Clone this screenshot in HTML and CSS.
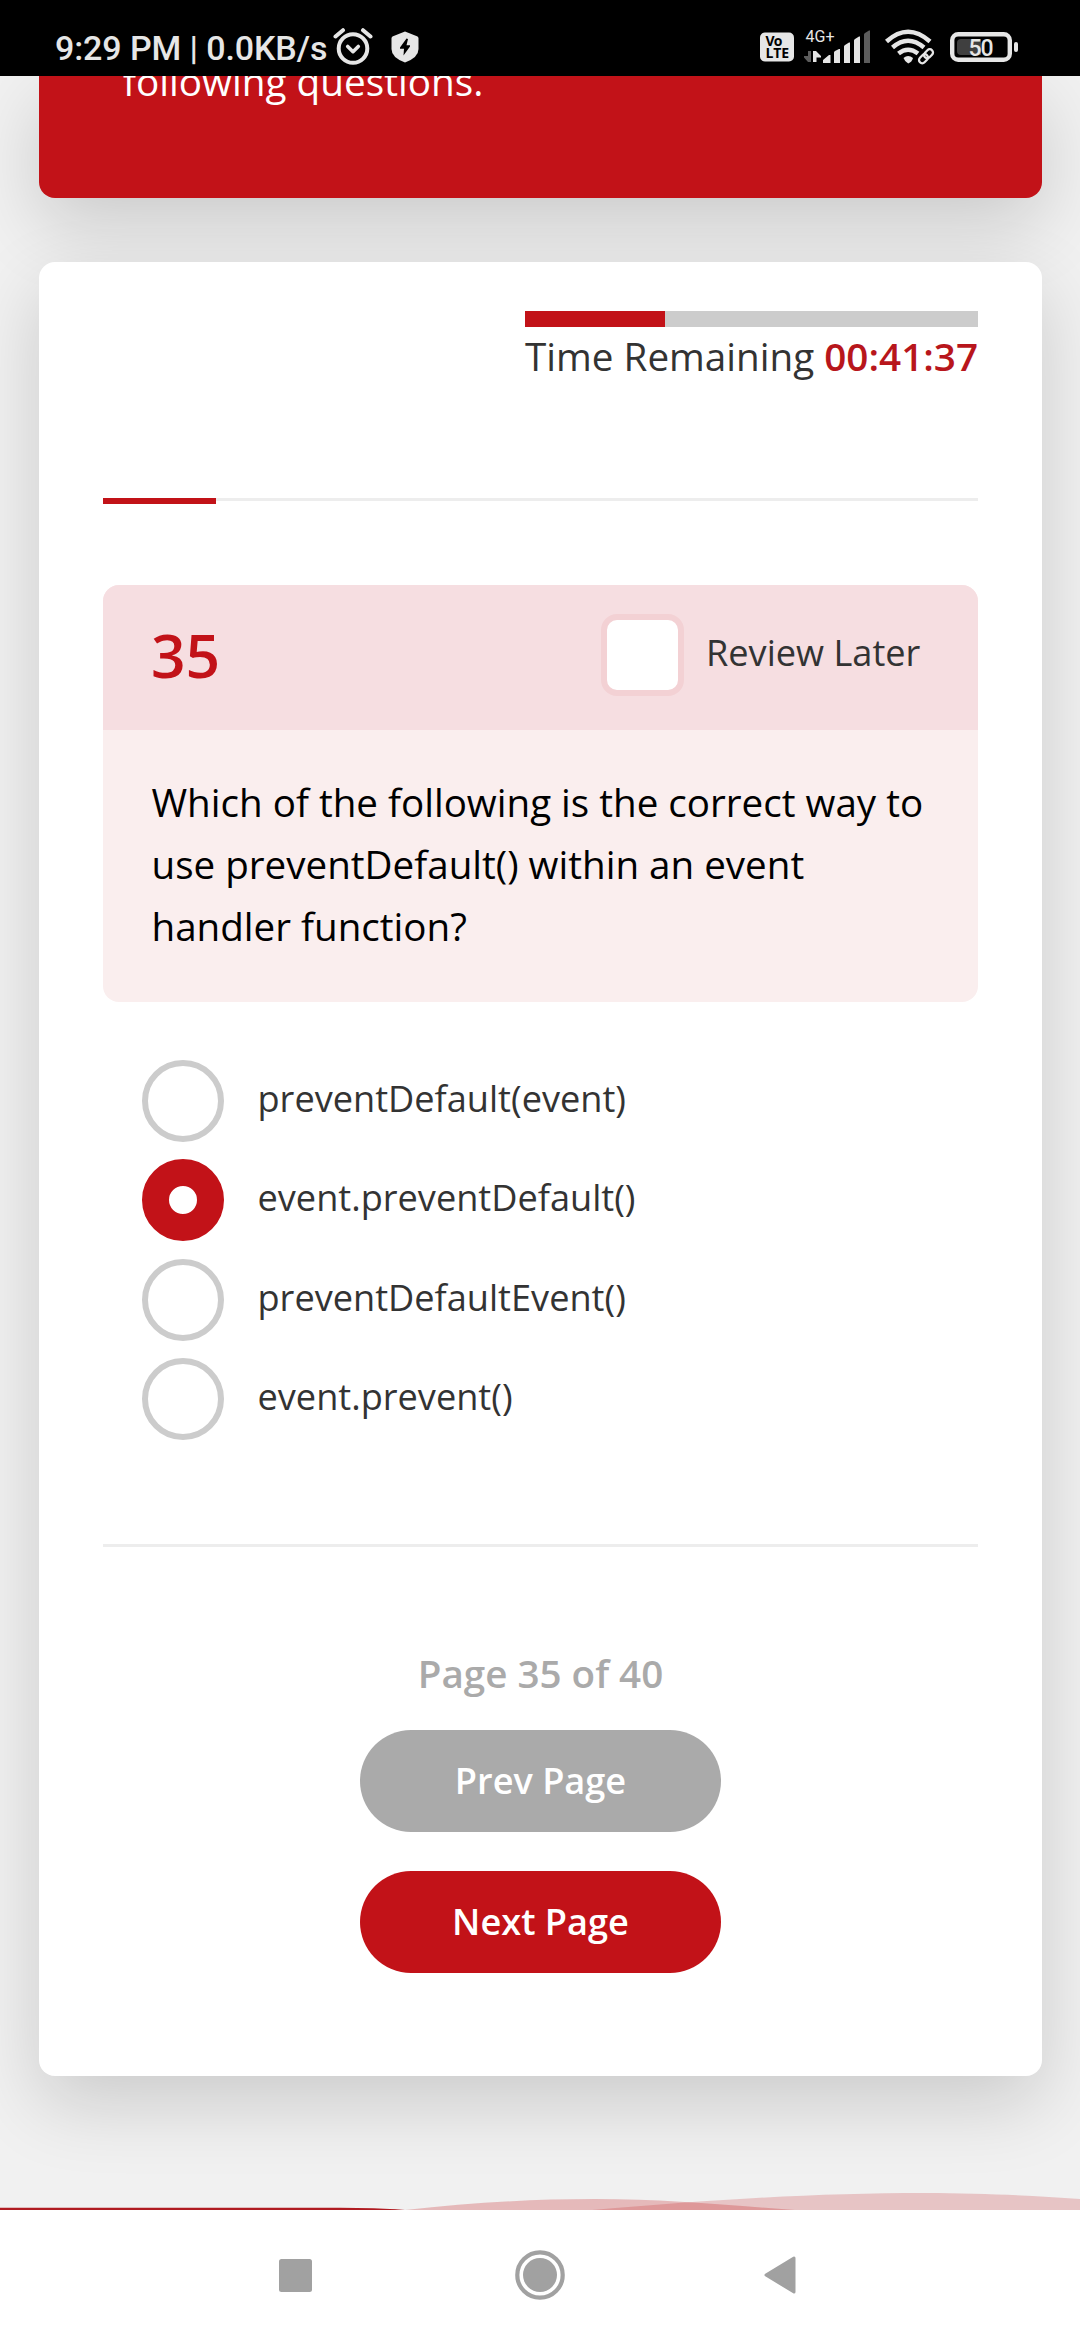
FILE: index.html
```html
<!DOCTYPE html>
<html lang="en">
<head>
<meta charset="utf-8">
<title>Quiz</title>
<link rel="stylesheet" href="styles.css">
</head>
<body>
<div class="screen">
  <header class="status">
    <span class="status-text">9:29 PM | 0.0KB/s</span>
    <svg class="ic-alarm" width="40" height="40" viewBox="0 0 40 40" fill="none" stroke="#e6e6e6" stroke-linecap="round">
      <circle cx="20" cy="21.5" r="14.3" stroke-width="4"/>
      <path d="M14.7 19.5l5.3 5.2 5.3-5.2" stroke-width="3.6" stroke-linejoin="round"/>
      <path d="M2.5 9.5L10 3.2M37.500 9.500L30 3.200" stroke-width="4"/>
    </svg>
    <svg class="ic-shield" width="28" height="32" viewBox="0 0 28 32">
      <path d="M14 .5L26 5.200Q27.500 5.800 27.500 7.500V18Q27.500 26.500 14 31.500Q.5 26.500.5 18V7.500Q.5 5.800 2 5.200Z" fill="#e6e6e6"/>
      <path d="M15.500 7.500L9 16.500V17.800H13L12.500 24.500L19 15.500V14.200H15.500L17 8Z" fill="#000"/>
    </svg>
    <div class="status-right">
      <svg width="34" height="30" viewBox="0 0 34 30">
        <rect y=".5" width="34" height="29" rx="5" fill="#e6e6e6"/>
        <text class="volte" x="5.500" y="13.500" textLength="17">Vo</text>
        <text class="volte" x="5.500" y="26" textLength="23.500">LTE</text>
      </svg>
      <svg class="ic-signal" width="68" height="34" viewBox="0 0 68 34">
        <text class="net" x="2.500" y="12" textLength="29">4G+</text>
        <path d="M5 21h3v11h-3l-4-4.500v-1.500h4z" fill="#5c5c5c"/>
        <path d="M10 32V21h3l5 5v1.500h-4.500V32z" fill="#e6e6e6"/>
        <g fill="#e6e6e6"><path d="M20 33v-3l6-5h1.500v8zM31 33V22.500q0-1 1-1.500l4-2h1v14zM41 33V16.500q0-1 1-1.500l4-2.500h1V33zM51 33V10.500q0-1 1-1.500l4-2.500h1V33z"/></g>
        <path d="M61 33V4.500q0-1 1-1.500l4-2.500h1V33z" fill="#5c5c5c"/>
      </svg>
      <svg class="ic-wifi" width="52" height="36" viewBox="0 0 52 36" fill="none" stroke="#e6e6e6">
        <path d="M1.500 12.500Q23 -7 45 12.500" stroke-width="4.500"/>
        <path d="M7.500 18.500Q23 5 39 18.500" stroke-width="4.500"/>
        <path d="M13.500 24.500Q23 17 33 24.500" stroke-width="4.500"/>
        <path d="M18.500 29Q23 25 28 29Q27 33 23.200 34.500Q20 33 18.500 29Z" fill="#e6e6e6" stroke="none"/>
        <g stroke="#000" stroke-width="6"><rect x="35" y="25" width="11" height="7" rx="3.500" transform="rotate(-45 39 29)"/></g>
        <g stroke-width="2.300"><rect x="33.500" y="26.500" width="10" height="6.500" rx="3.250" transform="rotate(-45 38.500 29.750)"/><rect x="38.500" y="21.500" width="10" height="6.500" rx="3.250" transform="rotate(-45 43.500 24.750)"/></g>
      </svg>
      <svg class="ic-battery" width="69" height="30" viewBox="0 0 69 30">
        <rect x="2.200" y="2.200" width="57.600" height="25.600" rx="6" fill="none" stroke="#e6e6e6" stroke-width="4.400"/>
        <path d="M11 7H31V23H11Q7 23 7 19V11Q7 7 11 7Z" fill="#3f3f3f"/>
        <rect x="64" y="10" width="4" height="10" rx="2" fill="#e6e6e6"/>
        <text class="charge" x="18.500" y="24" textLength="25">50</text>
      </svg>
    </div>
  </header>

  <main class="page">
    <section class="intro">following questions.</section>
    <section class="quiz">
      <div class="timer">
        <div class="timer-bar"><div class="timer-fill"></div></div>
        <div class="timer-text"><span class="timer-label">Time Remaining</span><strong class="timer-value">00:41:37</strong></div>
      </div>
      <div class="progress"><div class="progress-fill"></div></div>
      <article class="question">
        <div class="question-head">
          <span class="number">35</span>
          <span class="check"></span>
          <span class="review">Review Later</span>
        </div>
        <p class="question-text">Which of the following is the correct way to<br>use preventDefault() within an event<br>handler function?</p>
      </article>
      <ul class="options">
        <li class="option"><span class="radio"></span><span class="option-text">preventDefault(event)</span></li>
        <li class="option"><span class="radio radio-on"></span><span class="option-text">event.preventDefault()</span></li>
        <li class="option"><span class="radio"></span><span class="option-text">preventDefaultEvent()</span></li>
        <li class="option"><span class="radio"></span><span class="option-text">event.prevent()</span></li>
      </ul>
      <footer class="pager">
        <div class="page-count">Page 35 of 40</div>
        <div class="btn btn-prev">Prev Page</div>
        <div class="btn btn-next">Next Page</div>
      </footer>
    </section>
    <svg class="waves" width="1080" height="20" viewBox="0 0 1080 20">
      <path d="M405 20C470 13 530 9 595 9C665 9 725 15 795 20Z" fill="#c21218" fill-opacity=".25"/>
      <path d="M592 20C720 9 820 3 925 3C985 3 1035 6 1080 9V20Z" fill="#c21218" fill-opacity=".2"/>
      <path d="M0 17.700H340Q375 18 405 19.500L395 20H0Z" fill="#b01c22"/>
    </svg>
  </main>

  <nav class="nav">
    <svg width="33" height="33" viewBox="0 0 33 33"><rect width="33" height="33" rx="2.500" fill="#a1a1a1"/></svg>
    <svg class="nav-home" width="50" height="50" viewBox="0 0 50 50"><circle cx="25" cy="25" r="22.700" fill="none" stroke="#a1a1a1" stroke-width="4.200"/><circle cx="25" cy="25" r="17" fill="#a1a1a1"/></svg>
    <svg width="32" height="38" viewBox="0 0 32 38"><path d="M2 19L30 2V36Z" fill="#a1a1a1" stroke="#a1a1a1" stroke-width="3" stroke-linejoin="round"/></svg>
  </nav>
</div>
</body>
</html>
```
FILE: styles.css
```css
* { box-sizing: border-box; }
body { margin: 0; font-family: "Open Sans", sans-serif; color: #333; }
svg { display: block; flex: none; }
.screen { width: 1080px; height: 2340px; display: flex; flex-direction: column; overflow: hidden; background: #fff; }

.status { height: 76px; flex: none; background: #000; display: flex; align-items: flex-start; padding: 28px 61px 0 55px; color: #e6e6e6; font-family: Roboto, sans-serif; }
.status-text { font-size: 34px; line-height: 40px; width: 271px; white-space: nowrap; font-weight: 500; letter-spacing: -0.1px; }
.ic-alarm { margin: -1px 0 0 7px; }
.ic-shield { margin: 3px 0 0 18px; }
.status-right { margin-left: auto; display: flex; align-items: flex-start; padding-top: 4px; }
.ic-signal { margin: -2px 0 0 9px; }
.ic-wifi { margin: -3px 0 0 14px; }
.ic-battery { margin-left: 13px; }
.volte { font: 700 14px "Open Sans", sans-serif; fill: #000; }
.net { font: 400 16px Roboto, sans-serif; fill: #e6e6e6; }
.charge { font: 500 23px Roboto, sans-serif; fill: #e6e6e6; }

.page { height: 2134px; flex: none; background: #f1f1f1; padding: 0 38px 0 39px; overflow: hidden; display: flex; flex-direction: column; }
.intro { height: 122px; flex: none; border-radius: 0 0 16px 16px; background: #c21218; color: #fff; font-size: 38.7px; line-height: 10px; padding-left: 84px; box-shadow: 0 27px 76px rgba(0,0,0,.16); }
.quiz { height: 1814px; flex: none; margin-top: 64px; border-radius: 16px; background: #fff; box-shadow: 0 27px 76px rgba(0,0,0,.16); padding: 49px 64px 0; display: flex; flex-direction: column; }

.timer { align-self: flex-end; width: 453px; }
.timer-bar { height: 16px; background: #ccc; }
.timer-fill { width: 140px; height: 16px; background: #c21218; }
.timer-text { display: flex; justify-content: space-between; white-space: nowrap; margin-top: 3px; font-size: 38.65px; line-height: 52px; }
.timer-value { font-weight: 600; color: #b8161c; }
.progress { height: 3px; flex: none; background: #ededed; margin-top: 116px; }
.progress-fill { width: 113px; height: 6px; background: #c21218; }

.question { margin-top: 84px; height: 417px; flex: none; border-radius: 16px; overflow: hidden; background: #faeeee; }
.question-head { height: 145px; background: #f6dee1; display: flex; align-items: flex-start; padding: 29px 0 0 48px; }
.number { width: 450px; font-size: 60.5px; line-height: 82px; font-weight: 600; color: #c21218; }
.check { width: 83px; height: 82px; flex: none; border: 6px solid #f3d1d4; border-radius: 16px; background: #fff; }
.review { margin-left: 22px; font-size: 36.15px; line-height: 76px; white-space: nowrap; }
.question-text { margin: 0; padding: 41px 0 0 48.500px; color: #000; font-size: 38.6px; line-height: 62px; white-space: nowrap; }

.options { list-style: none; margin: 58px 0 0; padding: 0 0 0 39px; height: 382px; flex: none; display: grid; grid-auto-rows: 82px; gap: 17.3px; }
.option { display: flex; align-items: flex-start; }
.radio { width: 82px; height: 82px; flex: none; border: 6px solid #ccc; border-radius: 50%; }
.radio-on { border: 27px solid #c21218; }
.option-text { margin-left: 33.5px; font-size: 36.15px; line-height: 76px; white-space: nowrap; }

.pager { margin-top: 102px; border-top: 3px solid #ededed; padding-top: 100px; display: flex; flex-direction: column; align-items: center; font-weight: 600; }
.page-count { color: #aaa; font-size: 38.6px; line-height: 52px; }
.btn { width: 361px; height: 102px; border-radius: 51px; color: #fff; font-size: 36.15px; line-height: 100px; text-align: center; }
.btn-prev { margin-top: 31px; background: #aaa; }
.btn-next { margin-top: 39px; background: #c21218; }

.waves { margin: 114px 0 0 -39px; }
.nav { height: 130px; flex: none; background: #fff; display: flex; align-items: center; padding-left: 279px; }
.nav-home { margin: 0 199px 0 203px; }
```
